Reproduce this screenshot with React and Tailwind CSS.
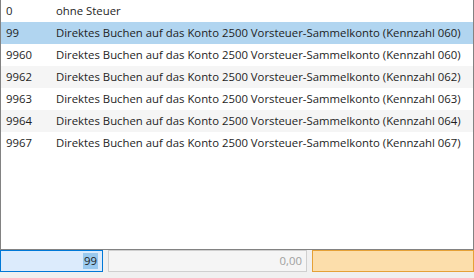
import React from 'react';

const rows = [
  { code: '0', text: 'ohne Steuer' },
  { code: '99', text: 'Direktes Buchen auf das Konto 2500 Vorsteuer-Sammelkonto (Kennzahl 060)' },
  { code: '9960', text: 'Direktes Buchen auf das Konto 2500 Vorsteuer-Sammelkonto (Kennzahl 060)' },
  { code: '9962', text: 'Direktes Buchen auf das Konto 2500 Vorsteuer-Sammelkonto (Kennzahl 062)' },
  { code: '9963', text: 'Direktes Buchen auf das Konto 2500 Vorsteuer-Sammelkonto (Kennzahl 063)' },
  { code: '9964', text: 'Direktes Buchen auf das Konto 2500 Vorsteuer-Sammelkonto (Kennzahl 064)' },
  { code: '9967', text: 'Direktes Buchen auf das Konto 2500 Vorsteuer-Sammelkonto (Kennzahl 067)' },
];

const App = () => {
  const selected = 1;

  return (
    <div className="w-[474px] h-[278px] bg-[#f0f0f0] font-['Open_Sans',sans-serif] text-[11.35px] text-[#1e1e1e] overflow-hidden">
      {/* Dropdown list */}
      <div className="h-[250px] bg-white border-l border-r border-b border-[#828282]">
        {rows.map((row, i) => {
          let bg = i % 2 === 0 ? 'bg-white' : 'bg-[#f5f5f5]';
          if (i === selected) bg = 'bg-[#b1d5f0]';
          return (
            <div key={row.code} className={`flex items-center h-[22px] ${bg}`}>
              <span className="w-[55px] pl-[5px]">{row.code}</span>
              <span className="whitespace-nowrap">{row.text}</span>
            </div>
          );
        })}
      </div>

      {/* Input fields */}
      <div className="flex h-[22px]">
        <div className="w-[103px] flex items-center justify-end pr-[4px] bg-[#dcebfc] border border-[#0078d7]">
          <span className="bg-[#99c9ef] leading-[16px] px-[1px]">99</span>
        </div>
        <div className="ml-[5px] w-[199px] flex items-center justify-end pr-[4px] bg-[#f5f5f5] border border-[#cfcfcf] text-[#a0a0a0]">
          0,00
        </div>
        <div className="ml-[5px] flex-1 bg-[#fcdeab] border border-[#e5a137]" />
      </div>
    </div>
  );
};

export default App;
